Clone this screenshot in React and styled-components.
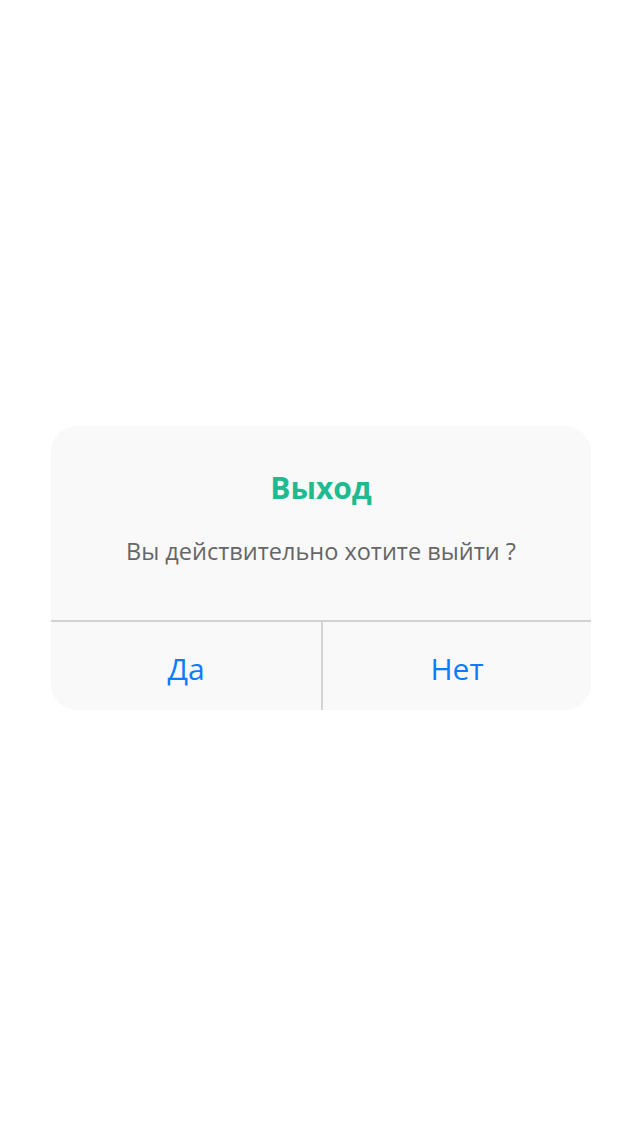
import React from 'react';
import styled, { createGlobalStyle } from 'styled-components';

const GlobalStyle = createGlobalStyle`
  html, body, #root {
    margin: 0;
    padding: 0;
    height: 100%;
    background: #ffffff;
  }
  body {
    font-family: 'Open Sans', 'Noto Sans', sans-serif;
  }
`;

const Screen = styled.div`
  height: 100%;
  display: flex;
  align-items: center;
  justify-content: center;
  padding-left: 2px;
  box-sizing: border-box;
`;

const Dialog = styled.div`
  width: 540px;
  background: #f9f9f9;
  border-radius: 26px;
  overflow: hidden;
`;

const Body = styled.div`
  display: flex;
  flex-direction: column;
  align-items: center;
  padding: 44px 20px 54px;
  border-bottom: 2px solid #d2d2d2;
`;

const Title = styled.h2`
  margin: 0;
  font-size: 30px;
  line-height: 36px;
  font-weight: 700;
  color: #1fba8f;
`;

const Message = styled.p`
  margin: 30px 0 0;
  font-size: 23.5px;
  line-height: 30px;
  color: #666666;
`;

const Actions = styled.div`
  display: grid;
  grid-template-columns: 1fr 1fr;
  height: 88px;
`;

const ActionButton = styled.button`
  border: none;
  background: transparent;
  font-family: inherit;
  font-size: 30px;
  color: #0a7cff;
  cursor: pointer;
  padding: 4px 0 0;
  border-left: ${(p) => (p.$divided ? '2px solid #d2d2d2' : 'none')};
`;

const App = () => {
  return (
    <>
      <GlobalStyle />
      <Screen>
        <Dialog>
          <Body>
            <Title>Выход</Title>
            <Message>Вы действительно хотите выйти ?</Message>
          </Body>
          <Actions>
            <ActionButton>Да</ActionButton>
            <ActionButton $divided>Нет</ActionButton>
          </Actions>
        </Dialog>
      </Screen>
    </>
  );
};

export default App;
